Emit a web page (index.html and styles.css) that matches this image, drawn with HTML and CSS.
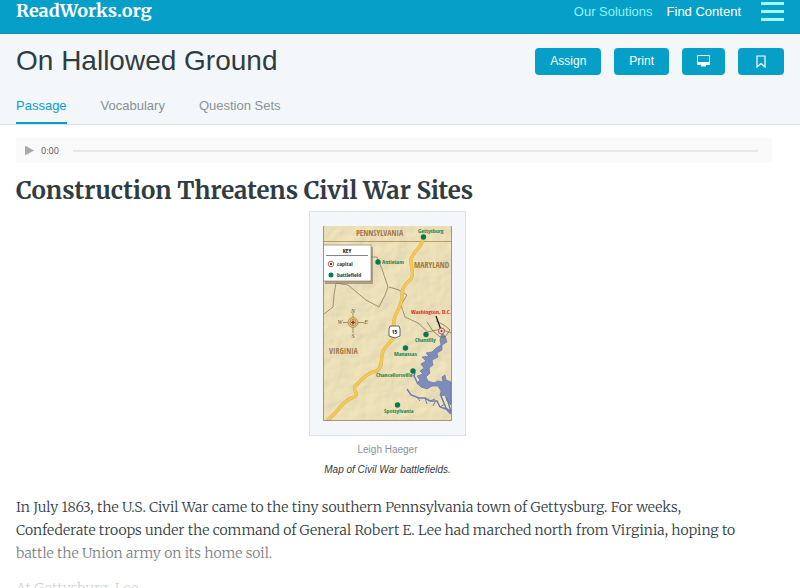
FILE: index.html
```html
<!DOCTYPE html>
<html lang="en">
<head>
    <meta charset="UTF-8">
    <meta name="viewport" content="width=device-width, initial-scale=1.0">
    <title>On Hallowed Ground - ReadWorks.org</title>
    <link rel="stylesheet" href="styles.css">
</head>
<body>
    <header class="topbar">
        <a class="logo" href="#">ReadWorks.org</a>
        <nav class="topnav">
            <a class="solutions" href="#">Our Solutions</a>
            <a href="#">Find Content</a>
        </nav>
        <button class="menu-button" aria-label="Menu">
            <span></span><span></span><span></span>
        </button>
    </header>

    <section class="title-area">
        <div class="title-row">
            <h1>On Hallowed Ground</h1>
            <div class="actions">
                <button class="action">Assign</button>
                <button class="action">Print</button>
                <button class="action" aria-label="Project">
                    <svg width="13" height="12" viewBox="0 0 13 12">
                        <path fill="#fff" fill-rule="evenodd" d="M1 0h11a1 1 0 0 1 1 1v8a1 1 0 0 1-1 1H9v1.500H4V10H1a1 1 0 0 1-1-1V1a1 1 0 0 1 1-1zM1 1v6h11V1z"/>
                    </svg>
                </button>
                <button class="action" aria-label="Bookmark">
                    <svg width="16" height="14" viewBox="0 0 16 14">
                        <path fill="none" stroke="#fff" stroke-width="1.200" d="M4 2h8v11L8 9.500 4 13z"/>
                    </svg>
                </button>
            </div>
        </div>
        <nav class="tabs">
            <a class="tab active" href="#">Passage</a>
            <a class="tab" href="#">Vocabulary</a>
            <a class="tab" href="#">Question Sets</a>
        </nav>
    </section>

    <main class="content">
        <div class="player">
            <button class="play" aria-label="Play"></button>
            <span class="time">0:00</span>
            <input class="seek" type="range" min="0" max="100" value="0" aria-label="Seek">
        </div>

        <h2>Construction Threatens Civil War Sites</h2>

        <figure class="figure">
            <div class="frame">
                <svg class="map" width="129" height="195" viewBox="0 0 129 195" role="img" aria-label="Map of Civil War battlefields">
                    <defs>
                        <filter id="paper" x="0" y="0" width="100%" height="100%">
                            <feTurbulence type="fractalNoise" baseFrequency="0.05" numOctaves="3" seed="4" result="n"/>
                            <feDiffuseLighting in="n" lighting-color="#f4e8c0" surfaceScale="1.300">
                                <feDistantLight azimuth="225" elevation="66"/>
                            </feDiffuseLighting>
                        </filter>
                    </defs>
                    <rect width="129" height="195" filter="url(#paper)"/>

                    <!-- state borders -->
                    <path d="M0 15.500H129" stroke="#aa8b55" stroke-width=".8"/>
                    <path d="M48 31l6 0 5 12 6 18-3 8-6 12-13-7-18-15-12-2-2 12-1 12-9 7M66 61l10 3 8 5-6 10 4 12 13 6 10 9 13-3 10 4" fill="none" stroke="#857b65" stroke-width=".8"/>

                    <!-- water -->
                    <path d="M119 107L117 114 118 119 113 122 109 126 103 127 106 130 99 131 103 135 98 138 101 142 97 145 100 148 94 150 97 154 94 157 98 161 104 163 109 160 115 160 118 165 117 170 122 169 124 175 128 179V156L123 154 122 149 119 151 120 156 115 155 111 157 105 155 103 151 107 147 106 142 110 139 109 134 115 131 114 127 119 124 119 119 124 116 122 110Z" fill="#7d8cbb" stroke="#6576a9" stroke-width=".7" stroke-linejoin="round"/>
                    <path d="M95 158l-4-8 1-4M118 170l5 12 5 4M124 172l4 14" fill="none" stroke="#6d7dad" stroke-width="1.500"/>
                    <path d="M84 163l4 6 8 3 6 0 5 3 7 0 3 6 6 2 5 5" fill="none" stroke="#6d7dad" stroke-width="1.500"/>
                    <path d="M94 171l3 4M102 172l2 6M107 175l5-2M112 176l-2 4M117 181l5-3" fill="none" stroke="#6d7dad"/>

                    <!-- route 15 -->
                    <path d="M100 13c-1 8-9 12-12 20-1 8 4 14 0 20-5 4-9 8-9 15 1 12-7 18-8 27l-1 17c-3 6-10 9-11 17-1 7 0 13-5 16-10 1-16 10-22 15-3 5 5 8-1 11-11 3-15 14-27 24" fill="none" stroke="#dcb045" stroke-width="3.400"/>
                    <path d="M100 13c-1 8-9 12-12 20-1 8 4 14 0 20-5 4-9 8-9 15 1 12-7 18-8 27l-1 17c-3 6-10 9-11 17-1 7 0 13-5 16-10 1-16 10-22 15-3 5 5 8-1 11-11 3-15 14-27 24" fill="none" stroke="#f3c854" stroke-width="2.600"/>
                    <path d="M67 100h9l1 3v7l-5 2-6-2v-7z" fill="#fff" stroke="#444" stroke-width=".8"/>
                    <text class="shield" x="71.500" y="108">15</text>

                    <!-- compass -->
                    <g stroke="#806c43" stroke-width=".7" fill="none">
                        <path d="M30 87v20M20 96.500h21"/>
                        <circle cx="30" cy="96.500" r="5" fill="#e3c873" stroke="#a58238"/>
                        <circle cx="30" cy="96.500" r="3" fill="#f2e4b8"/>
                    </g>
                    <path d="M30 94l1 1.500 1.500 1-1.500 1-1 1.500-1-1.500-1.500-1 1.500-1z" fill="#963a22"/>
                    <text class="compass" x="30" y="87">N</text>
                    <text class="compass" x="30" y="112">S</text>
                    <text class="compass" x="17" y="98">W</text>
                    <text class="compass" x="43" y="98">E</text>

                    <text class="state" x="33" y="10">PENNSYLVANIA</text>
                    <text class="state" x="91" y="42">MARYLAND</text>
                    <text class="state" x="6" y="128">VIRGINIA</text>

                    <path d="M104 96l6 9 7 6 5 0 5-7-6-5-8-4" fill="none" stroke="#735e49" stroke-width=".7"/>
                    <path d="M113 90l5 14" stroke="#111" stroke-width="1.200"/>
                    <circle cx="118.500" cy="105" r="3" fill="#f3d8cb" stroke="#963b36" stroke-width=".8"/>
                    <circle cx="118.500" cy="105" r="1" fill="#a01818"/>
                    <text class="capital" x="88" y="88">Washington, D.C.</text>

                    <g fill="#087a53">
                        <circle cx="100.500" cy="11" r="2.700"/>
                        <circle cx="55" cy="36" r="2.700"/>
                        <circle cx="103" cy="108.500" r="2.700"/>
                        <circle cx="82.500" cy="122" r="2.700"/>
                        <circle cx="90" cy="145" r="2.700"/>
                        <circle cx="74.500" cy="179" r="2.700"/>
                    </g>
                    <text class="battle" x="95" y="7">Gettysburg</text>
                    <text class="battle" x="59" y="38">Antietam</text>
                    <text class="battle" x="92" y="116">Chantilly</text>
                    <text class="battle" x="71" y="130">Manassas</text>
                    <text class="battle" x="53" y="151">Chancellorsville</text>
                    <text class="battle" x="61" y="187">Spotsylvania</text>

                    <!-- key -->
                    <rect x="2" y="21" width="48" height="37" fill="#83765a" opacity=".6"/>
                    <rect x="0" y="19" width="48" height="36" fill="#fff" stroke="#8d846b" stroke-width=".7"/>
                    <text class="key" x="24" y="27">KEY</text>
                    <path d="M3 29.500h42" stroke="#333" stroke-width=".6"/>
                    <circle cx="8" cy="38" r="2.800" fill="#fff" stroke="#9d4540" stroke-width=".8"/>
                    <circle cx="8" cy="38" r="1.200" fill="#a22420"/>
                    <circle cx="8" cy="49" r="2.500" fill="#087a53"/>
                    <text class="label" x="14" y="40">capital</text>
                    <text class="label" x="14" y="51">battlefield</text>
                    <path d="M.5 0V194.500H128.500V0" fill="none" stroke="#89795a" stroke-width=".7"/>
                </svg>
            </div>
            <figcaption>
                <span class="credit">Leigh Haeger</span>
                <em>Map of Civil War battlefields.</em>
            </figcaption>
        </figure>

        <div class="passage">
            <p>In July 1863, the U.S. Civil War came to the tiny southern Pennsylvania town of Gettysburg. For weeks, Confederate troops under the command of General Robert E. Lee had marched north from Virginia, hoping to battle the Union army on its home soil.</p>
            <p>At Gettysburg, Lee</p>
        </div>
    </main>
</body>
</html>
```
FILE: styles.css
```css
* {
    box-sizing: border-box;
}
body {
    margin: 0;
    font-family: "Helvetica Neue", "Liberation Sans", Arial, sans-serif;
    background-color: #fff;
    color: #303c42;
}
a {
    text-decoration: none;
}
button {
    border: none;
    font-family: inherit;
    cursor: pointer;
}
.topbar {
    display: flex;
    align-items: center;
    padding: 0 16px 11px;
    background: #069fc7;
    border-bottom: 1px solid #078fb4;
}
.logo {
    margin-right: auto;
    color: #fff;
    font-family: Merriweather, "Liberation Serif", serif;
    font-size: 18px;
    font-weight: bold;
    line-height: 22px;
}
.topnav {
    display: flex;
    gap: 14px;
    margin-right: 20px;
    font-size: 13px;
}
.topnav a {
    color: #fff;
}
.topnav .solutions {
    color: #8ff3fb;
}
.menu-button {
    display: flex;
    flex-direction: column;
    gap: 5px;
    width: 23px;
    padding: 0;
    background: none;
}
.menu-button span {
    height: 3px;
    background: #a5f8fd;
}
.title-area {
    padding: 11px 16px 0;
    background: #f3f7f9;
    border-bottom: 1px solid #d8dfe1;
}
.title-row {
    display: flex;
    justify-content: space-between;
    align-items: center;
    padding-bottom: 16px;
}
h1 {
    margin: 0;
    font-size: 28px;
    font-weight: normal;
    line-height: 32px;
}
.actions {
    display: flex;
    gap: 13px;
}
.action {
    display: flex;
    align-items: center;
    justify-content: center;
    height: 27px;
    padding: 0 15px;
    border-radius: 4px;
    background: #069fc7;
    color: #fff;
    font-size: 12px;
}
.tabs {
    display: flex;
    gap: 34px;
}
.tab {
    padding: 4px 0 7px;
    border-bottom: 2px solid transparent;
    color: #899196;
    font-size: 13px;
    line-height: 18px;
}
.tab.active {
    border-bottom-color: #069fc7;
    color: #069fc7;
}
.content {
    padding: 13px 28px 0 16px;
}
.player {
    display: flex;
    align-items: center;
    height: 25px;
    padding: 0 14px 0 9px;
    background: #f9f9f9;
}
.play {
    width: 9px;
    height: 10px;
    padding: 0;
    background: #aaa;
    clip-path: polygon(0 0, 100% 50%, 0 100%);
}
.time {
    margin: 0 14px 0 7px;
    color: #555;
    font-family: "Open Sans", sans-serif;
    font-size: 9px;
}
.seek {
    appearance: none;
    flex: 1;
    height: 2px;
    margin: 0;
    background: #e8e8e8;
}
.seek::-webkit-slider-thumb {
    appearance: none;
    width: 0;
    height: 0;
}
h2 {
    margin: 12px 0 4px;
    font-family: Merriweather, "DejaVu Serif Condensed", "DejaVu Serif", serif;
    font-size: 24px;
    line-height: 32px;
}
.figure {
    display: flex;
    flex-direction: column;
    align-items: center;
    margin: 0 13px 16px 0;
}
.frame {
    padding: 14px 13px;
    background: #f3f7f9;
    border: 1px solid #dce2e4;
}
.map {
    display: block;
}
.map text {
    font-family: "Liberation Sans Narrow", "Open Sans Condensed", "DejaVu Sans Condensed", sans-serif;
    font-weight: bold;
}
.map .state {
    fill: #a47845;
    font-size: 8px;
}
.map .battle {
    fill: #24824a;
    font-size: 6px;
}
.map .capital {
    fill: #d52b24;
    font-size: 6px;
}
.map .label {
    fill: #333;
    font-size: 6px;
}
.map .key {
    fill: #111;
    font-size: 6px;
    text-anchor: middle;
}
.map .shield {
    fill: #222;
    font-size: 6px;
    text-anchor: middle;
}
.map .compass {
    fill: #615333;
    font-family: "Liberation Serif", serif;
    font-size: 6px;
    font-style: italic;
    font-weight: normal;
    text-anchor: middle;
}
figcaption {
    display: flex;
    flex-direction: column;
    align-items: center;
    padding-top: 4px;
    font-size: 10px;
    line-height: 20px;
}
.credit {
    color: #8b9296;
}
.passage {
    position: relative;
    max-height: 92px;
    margin-right: 13px;
    overflow: hidden;
    font-family: Merriweather, "DejaVu Serif Condensed", "DejaVu Serif", serif;
    font-size: 14px;
    font-weight: 300;
    line-height: 23px;
}
.passage p {
    margin: 0 0 12px;
}
/* fade out the end of the preview */
.passage::after {
    content: "";
    position: absolute;
    inset: 46px 0 0;
    background: linear-gradient(rgba(255, 255, 255, 0.2), rgba(255, 255, 255, 0.8));
}
```
